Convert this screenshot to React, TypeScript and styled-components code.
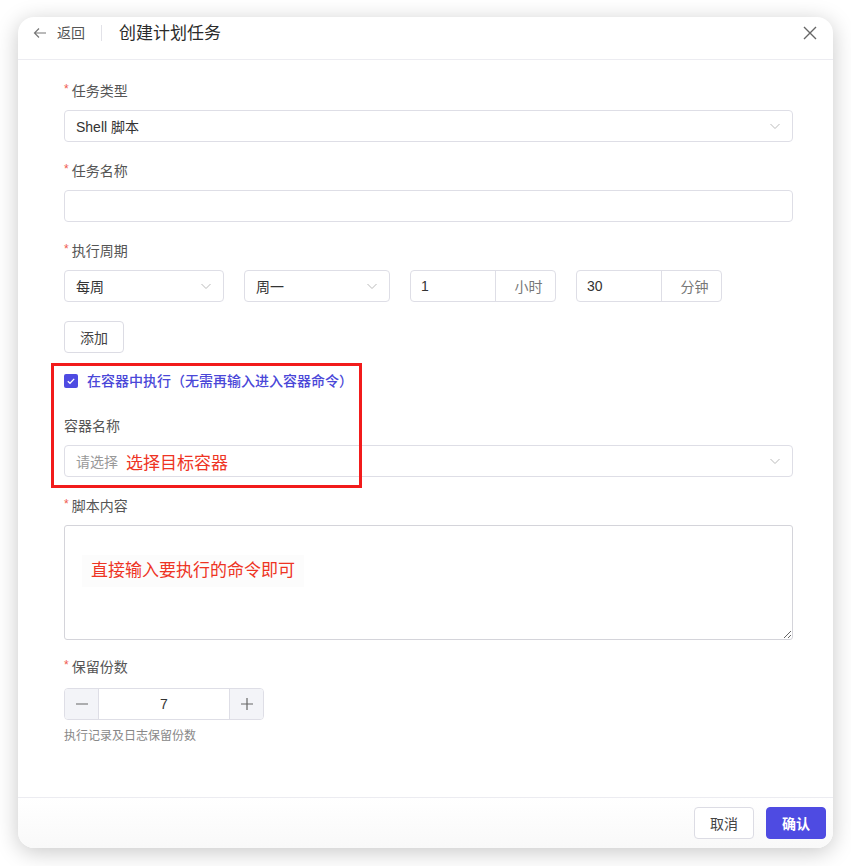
import {FC} from 'react'
import styled, {createGlobalStyle} from 'styled-components'

const GlobalStyle = createGlobalStyle`
  html, body {
    margin: 0;
    background: #ffffff;
    font-family: "Liberation Sans", "Noto Sans CJK SC", sans-serif;
    color: #333;
  }
`

const Page = styled.div`
  padding: 17px 18px 18px;
`

const Card = styled.div`
  width: 815px;
  height: 831px;
  border-radius: 16px;
  background: #fff;
  box-shadow: 0 4px 22px rgba(0, 0, 0, 0.22);
  display: flex;
  flex-direction: column;
  overflow: hidden;
`

const Header = styled.div`
  height: 43px;
  box-sizing: border-box;
  flex: none;
  display: flex;
  align-items: flex-start;
  padding: 5px 15px 0;
  border-bottom: 1px solid #ececf1;
`

const Back = styled.div`
  display: flex;
  align-items: center;
  gap: 10px;
  height: 22px;
  line-height: 22px;
  color: #555;
  font-size: 14px;
`

const Divider = styled.span`
  width: 1px;
  height: 16px;
  background: #e2e2e8;
  margin: 3px 17px 0 16px;
`

const Title = styled.div`
  font-size: 17px;
  line-height: 22px;
  margin-top: 1px;
  color: #2b2b2b;
`

const Close = styled.div`
  margin-left: auto;
  height: 22px;
  display: flex;
  align-items: center;
`

const Body = styled.div`
  flex: 1;
  padding: 20px 40px 0 46px;
`

const Item = styled.div<{$gap?: number}>`
  margin-bottom: ${p => p.$gap ?? 18}px;
`

const Label = styled.div<{$space?: number}>`
  font-size: 14px;
  line-height: 22px;
  color: #555;
  margin-bottom: ${p => p.$space ?? 8}px;
  display: flex;
  align-items: center;
`

const Star = styled.span`
  color: #f05a4f;
  font-size: 12px;
  margin-right: 3px;
  position: relative;
  top: -2px;
`

const Field = styled.div<{$width?: number}>`
  height: 32px;
  box-sizing: border-box;
  width: ${p => (p.$width ? `${p.$width}px` : '100%')};
  border: 1px solid #dedee6;
  border-radius: 4px;
  display: flex;
  align-items: center;
  padding: 0 11px;
  font-size: 14px;
  color: #333;
  background: #fff;
`

const Placeholder = styled.span`
  color: #999;
`

const Chevron = styled.svg`
  margin-left: auto;
  flex: none;
`

const Row = styled.div`
  display: flex;
  gap: 20px;
`

const Suffixed = styled.div`
  width: 146px;
  height: 32px;
  box-sizing: border-box;
  border: 1px solid #dedee6;
  border-radius: 4px;
  display: flex;
  font-size: 14px;
`

const SuffixValue = styled.div`
  flex: 1;
  display: flex;
  align-items: center;
  padding-left: 10px;
  color: #333;
`

const Suffix = styled.div`
  width: 60px;
  border-left: 1px solid #dedee6;
  display: flex;
  align-items: center;
  justify-content: center;
  padding-left: 6px;
  box-sizing: border-box;
  color: #777;
`

const Button = styled.button<{$primary?: boolean}>`
  height: 32px;
  width: 60px;
  box-sizing: border-box;
  border-radius: 4px;
  font-family: inherit;
  font-size: 14px;
  border: 1px solid ${p => (p.$primary ? '#4e4be2' : '#dcdce4')};
  background: ${p => (p.$primary ? '#4e4be2' : '#fff')};
  color: ${p => (p.$primary ? '#fff' : '#444')};
  font-weight: ${p => (p.$primary ? 600 : 400)};
  padding: 0;
`

const Annotated = styled.div`
  position: relative;
  margin-top: 17px;
`

const RedBox = styled.div`
  position: absolute;
  left: -13px;
  top: -7px;
  width: 311px;
  height: 125px;
  box-sizing: border-box;
  border: 3px solid #f21b1b;
  pointer-events: none;
`

const CheckRow = styled.label`
  display: flex;
  align-items: center;
  gap: 9px;
  font-size: 14px;
  line-height: 22px;
  color: #4a47d8;
  font-weight: 500;
  margin-bottom: 23px;
`

const CheckBox = styled.span`
  width: 14px;
  height: 14px;
  border-radius: 2px;
  background: #4e4be2;
  display: flex;
  align-items: center;
  justify-content: center;
`

const Note = styled.span`
  color: #ee3424;
  font-size: 17px;
  background: #fff;
  padding: 0 6px 0 8px;
`

const TextBox = styled.div`
  position: relative;
  height: 115px;
`

const TextArea = styled.textarea`
  width: 100%;
  height: 115px;
  box-sizing: border-box;
  border: 1px solid #d4d4da;
  border-radius: 3px;
  resize: vertical;
  display: block;
  font-family: inherit;
`

const AreaNote = styled.span`
  position: absolute;
  left: 18px;
  top: 30px;
  padding: 4px 9px;
  background: #fcfcfc;
  color: #ee3424;
  font-size: 17px;
  line-height: 24px;
`

const Stepper = styled.div`
  width: 200px;
  height: 32px;
  box-sizing: border-box;
  border: 1px solid #dedee6;
  border-radius: 4px;
  display: flex;
  overflow: hidden;
`

const StepButton = styled.div`
  width: 33px;
  background: #f3f4f8;
  display: flex;
  align-items: center;
  justify-content: center;
  color: #555;
`

const StepValue = styled.div`
  flex: 1;
  border-left: 1px solid #dedee6;
  border-right: 1px solid #dedee6;
  display: flex;
  align-items: center;
  justify-content: center;
  font-size: 14px;
  color: #333;
`

const Help = styled.div`
  font-size: 12px;
  color: #888;
  line-height: 20px;
  margin-top: 6px;
`

const Footer = styled.div`
  flex: none;
  height: 51px;
  box-sizing: border-box;
  border-top: 1px solid #ececf1;
  background: linear-gradient(#fff, #f9f9f9);
  display: flex;
  justify-content: flex-end;
  align-items: flex-start;
  gap: 12px;
  padding: 9px 7px 0 0;
`

const Down: FC = () => (
  <Chevron width="12" height="12" viewBox="0 0 12 12">
    <path d="M1.5 4l4.5 4.5L10.5 4" fill="none" stroke="#bbb" strokeWidth="1" />
  </Chevron>
)

const Select: FC<{value?: string; placeholder?: string; width?: number; note?: string}> = ({
  value,
  placeholder,
  width,
  note,
}) => (
  <Field $width={width}>
    {value ? <span>{value}</span> : <Placeholder>{placeholder}</Placeholder>}
    {note && <Note>{note}</Note>}
    <Down />
  </Field>
)

const FormLabel: FC<{text: string; required?: boolean; space?: number}> = ({text, required, space}) => (
  <Label $space={space}>
    {required && <Star>*</Star>}
    {text}
  </Label>
)

const App: FC = () => {
  return (
    <Page>
      <GlobalStyle />
      <Card>
        <Header>
          <Back>
            <svg width="14" height="14" viewBox="0 0 14 14">
              <path d="M13 7H1.5M6 2.5L1.5 7 6 11.5" fill="none" stroke="#777" strokeWidth="1.2" />
            </svg>
            <span>返回</span>
          </Back>
          <Divider />
          <Title>创建计划任务</Title>
          <Close>
            <svg width="16" height="16" viewBox="0 0 16 16">
              <path d="M2 2l12 12M14 2L2 14" stroke="#666" strokeWidth="1.4" />
            </svg>
          </Close>
        </Header>
        <Body>
          <Item>
            <FormLabel text="任务类型" required />
            <Select value="Shell 脚本" />
          </Item>
          <Item>
            <FormLabel text="任务名称" required />
            <Field />
          </Item>
          <Item $gap={19}>
            <FormLabel text="执行周期" required />
            <Row>
              <Select value="每周" width={160} />
              <Select value="周一" width={146} />
              <Suffixed>
                <SuffixValue>1</SuffixValue>
                <Suffix>小时</Suffix>
              </Suffixed>
              <Suffixed>
                <SuffixValue>30</SuffixValue>
                <Suffix>分钟</Suffix>
              </Suffixed>
            </Row>
          </Item>
          <Button>添加</Button>
          <Annotated>
            <CheckRow>
              <CheckBox>
                <svg width="10" height="10" viewBox="0 0 10 10">
                  <path d="M1.8 5.2l2.2 2.1 4.2-4.4" fill="none" stroke="#fff" strokeWidth="1.3" />
                </svg>
              </CheckBox>
              在容器中执行（无需再输入进入容器命令）
            </CheckRow>
            <Item>
              <FormLabel text="容器名称" />
              <Select placeholder="请选择" note="选择目标容器" />
            </Item>
            <RedBox />
          </Annotated>
          <Item $gap={16}>
            <FormLabel text="脚本内容" required />
            <TextBox>
              <TextArea />
              <AreaNote>直接输入要执行的命令即可</AreaNote>
            </TextBox>
          </Item>
          <Item>
            <FormLabel text="保留份数" required space={10} />
            <Stepper>
              <StepButton>
                <svg width="14" height="14" viewBox="0 0 14 14">
                  <path d="M1 7h12" stroke="#666" strokeWidth="1.2" />
                </svg>
              </StepButton>
              <StepValue>7</StepValue>
              <StepButton>
                <svg width="14" height="14" viewBox="0 0 14 14">
                  <path d="M1 7h12M7 1v12" stroke="#666" strokeWidth="1.2" />
                </svg>
              </StepButton>
            </Stepper>
            <Help>执行记录及日志保留份数</Help>
          </Item>
        </Body>
        <Footer>
          <Button>取消</Button>
          <Button $primary>确认</Button>
        </Footer>
      </Card>
    </Page>
  )
}

export default App
